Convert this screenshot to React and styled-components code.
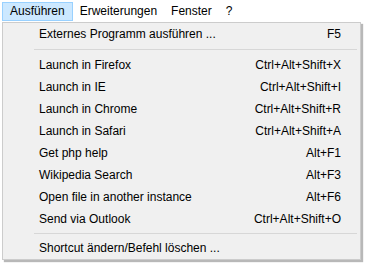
import React from "react";
import styled, { createGlobalStyle } from "styled-components";

const Global = createGlobalStyle`
  html, body { margin: 0; padding: 0; background: #ffffff; }
  body { font-family: "Liberation Sans", Arial, sans-serif; font-size: 12px; color: #000; }
  * { box-sizing: border-box; }
`;

const Page = styled.div`
  width: 365px;
  height: 263px;
  position: relative;
  overflow: hidden;
  background: #ffffff;
`;

const MenuBar = styled.div`
  display: flex;
  height: 22px;
  padding: 2px 0 1px 2px;
  align-items: stretch;
`;

const BarItem = styled.div`
  display: flex;
  align-items: center;
  padding: 0 ${(p) => (p.$active ? 7 : 6)}px 1px;
  border: 1px solid ${(p) => (p.$active ? "#99d1ff" : "transparent")};
  background: ${(p) => (p.$active ? "#cce8ff" : "transparent")};
  white-space: nowrap;
`;

const Dropdown = styled.div`
  position: absolute;
  left: 2px;
  top: 22px;
  width: 359px;
  background: #f0f0f0;
  border: 1px solid #cccccc;
  box-shadow: 2px 2px 1px rgba(0, 0, 0, 0.28);
  padding: 0 2px;
  display: flex;
  flex-direction: column;
`;

const Item = styled.div`
  display: flex;
  flex-shrink: 0;
  align-items: center;
  height: 22px;
  padding: 0 17px 0 34px;
  white-space: nowrap;
`;

const Label = styled.span`
  flex: 1;
`;

const Shortcut = styled.span`
  text-align: right;
`;

const Separator = styled.div`
  flex-shrink: 0;
  height: ${(p) => p.$h || 9}px;
  display: flex;
  align-items: center;
  padding: 0 1px 0 29px;
  &::after {
    content: "";
    flex: 1;
    height: 1px;
    background: #d7d7d7;
  }
`;

const items = [
  ["Launch in Firefox", "Ctrl+Alt+Shift+X"],
  ["Launch in IE", "Ctrl+Alt+Shift+I"],
  ["Launch in Chrome", "Ctrl+Alt+Shift+R"],
  ["Launch in Safari", "Ctrl+Alt+Shift+A"],
  ["Get php help", "Alt+F1"],
  ["Wikipedia Search", "Alt+F3"],
  ["Open file in another instance", "Alt+F6"],
  ["Send via Outlook", "Ctrl+Alt+Shift+O"],
];

export default function App() {
  return (
    <Page>
      <Global />
      <MenuBar>
        <BarItem $active>Ausführen</BarItem>
        <BarItem>Erweiterungen</BarItem>
        <BarItem>Fenster</BarItem>
        <BarItem>?</BarItem>
      </MenuBar>
      <Dropdown>
        <Item>
          <Label>Externes Programm ausführen ...</Label>
          <Shortcut>F5</Shortcut>
        </Item>
        <Separator $h={9} />
        {items.map(([l, s]) => (
          <Item key={l}>
            <Label>{l}</Label>
            <Shortcut>{s}</Shortcut>
          </Item>
        ))}
        <Separator $h={7} />
        <Item>
          <Label>Shortcut ändern/Befehl löschen ...</Label>
        </Item>
      </Dropdown>
    </Page>
  );
}
